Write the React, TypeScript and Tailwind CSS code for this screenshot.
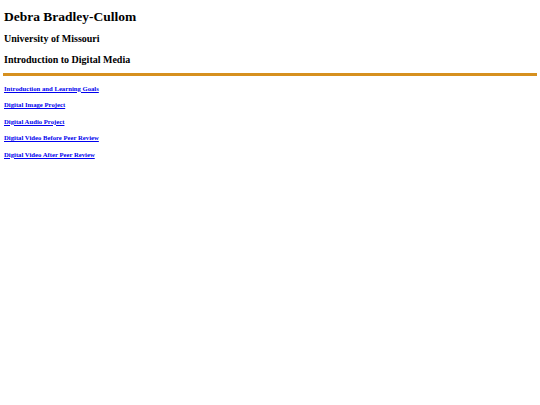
import React from "react";

const links = [
  "Introduction and Learning Goals",
  "Digital Image Project",
  "Digital Audio Project",
  "Digital Video Before Peer Review",
  "Digital Video After Peer Review",
];

export default function App() {
  return (
    <div className="min-h-screen bg-white px-[3px] pt-[8.5px] text-black" style={{ fontFamily: '"Liberation Serif", "Times New Roman", serif' }}>
      <h1 className="pl-px text-[13.5px] font-bold leading-[16px]">Debra Bradley-Cullom</h1>
      <h2 className="mt-[8px] pl-px text-[10px] font-bold leading-[12px]">University of Missouri</h2>
      <h3 className="mt-[9px] pl-px text-[10px] font-bold leading-[12px]">Introduction to Digital Media</h3>
      <hr className="mt-[7.4px] h-[3px] border-0 bg-[#d6901f]" />
      <ul className="mt-[9px] flex flex-col gap-[8.5px] pl-px">
        {links.map((l) => (
          <li key={l} className="text-[6.7px] font-bold leading-[8px]">
            <a href="#" className="text-[#0000ee] underline">{l}</a>
          </li>
        ))}
      </ul>
    </div>
  );
}
